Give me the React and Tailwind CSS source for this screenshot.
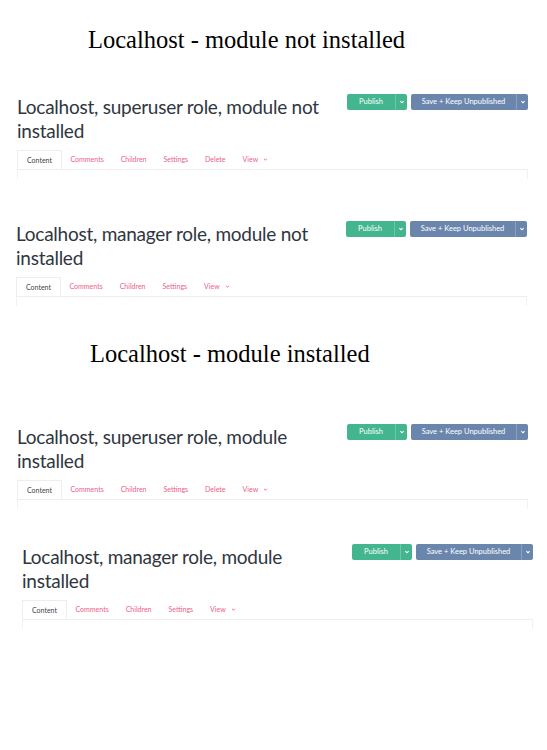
import React from 'react';

function Chevron({ className }) {
  return (
    <svg viewBox="0 0 10 10" className={className} fill="none" stroke="currentColor" strokeWidth="1.4">
      <path d="M3 4l2 2 2-2" />
    </svg>
  );
}

function SplitButton({ label, color, divider, mainWidth }) {
  return (
    <div className={`flex h-[16px] rounded-[2px] overflow-hidden text-white ${color}`}>
      <div className={`${mainWidth} flex items-center justify-center text-[7.5px]`}>{label}</div>
      <div className={`w-[12px] flex items-center justify-center border-l ${divider}`}>
        <Chevron className="w-[8px] h-[8px]" />
      </div>
    </div>
  );
}

function Block({ title, tabs, className }) {
  return (
    <div className={`font-['Lato',sans-serif] ${className}`}>
      <div className="flex justify-between items-start">
        <h2 className="mt-[1px] w-[320px] text-[19px] leading-[24px] tracking-[-0.25px] text-[#2f3640]">
          {title}
        </h2>
        <div className="flex gap-[4px]">
          <SplitButton label="Publish" color="bg-[#43b58f]" divider="border-[#6cc7a8]" mainWidth="w-[48px]" />
          <SplitButton label="Save + Keep Unpublished" color="bg-[#6b86ad]" divider="border-[#8aa0c0]" mainWidth="w-[105px]" />
        </div>
      </div>
      <div className="mt-[7px] text-[7px]">
        <div className="flex border-b border-[#eeeeee]">
          <div className="h-[19px] px-[9px] flex items-center border border-b-0 border-[#eeeeee] text-[#444] -mb-px bg-white">
            Content
          </div>
          {tabs.map((t) => (
            <div key={t} className="h-[19px] px-[8.5px] flex items-center text-[#ec6189]">
              {t}
            </div>
          ))}
          <div className="h-[19px] px-[8.5px] flex items-center gap-[4px] text-[#ec6189]">
            View <Chevron className="w-[7px] h-[7px]" />
          </div>
        </div>
        <div className="h-[9px] border-x border-[#f2f2f2]" />
      </div>
    </div>
  );
}

export default function App() {
  const full = ['Comments', 'Children', 'Settings', 'Delete'];
  const mgr = ['Comments', 'Children', 'Settings'];
  return (
    <div className="w-[547px] h-[750px] bg-white overflow-hidden">
      <h1 className="pt-[25px] pl-[88px] text-[24.5px] leading-[30px] text-black font-['Liberation_Serif',serif]">
        Localhost - module not installed
      </h1>
      <Block className="mt-[39px] ml-[17px] mr-[19px]" title="Localhost, superuser role, module not installed" tabs={full} />
      <Block className="mt-[42px] ml-[16px] mr-[20px]" title="Localhost, manager role, module not installed" tabs={mgr} />
      <h1 className="mt-[33px] pl-[90px] text-[24.5px] leading-[30px] text-black font-['Liberation_Serif',serif]">
        Localhost - module installed
      </h1>
      <Block className="mt-[55px] ml-[17px] mr-[19px]" title="Localhost, superuser role, module installed" tabs={full} />
      <Block className="mt-[35px] ml-[22px] mr-[14px]" title="Localhost, manager role, module installed" tabs={mgr} />
    </div>
  );
}
